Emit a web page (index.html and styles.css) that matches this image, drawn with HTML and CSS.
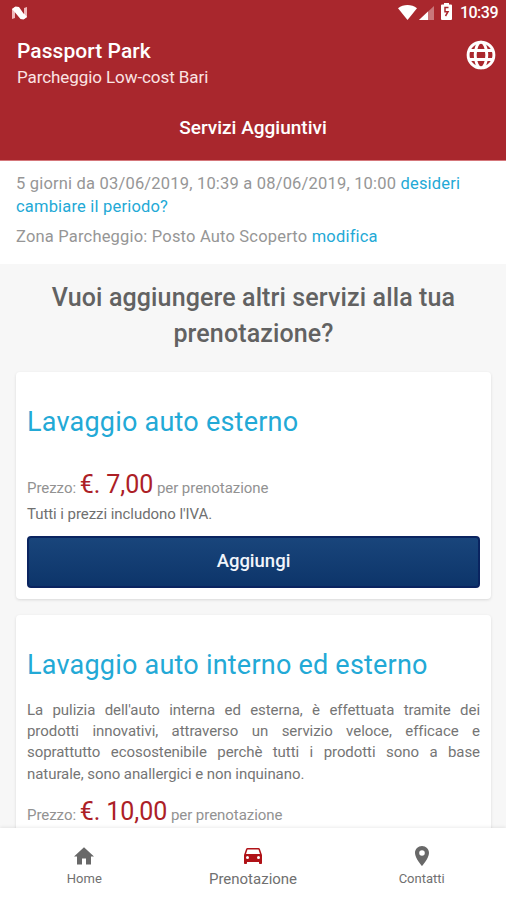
FILE: index.html
```html
<!DOCTYPE html>
<html lang="it">
<head>
<meta charset="utf-8">
<title>Passport Park</title>
<link rel="stylesheet" href="styles.css">
</head>
<body>
<div class="app">
  <header class="header">
    <div class="status">
      <svg class="status-logo" width="16" height="14" viewBox="0 0 16 14"><path d="M0 13V3L3 1v11zM15 1v10l-3 2V2z" fill="#efb9bb"/><path d="M0 3 3.500 0.500 7 1l4.500 6.500 1 .500 2.500 3-3.500 2.500L8.500 13 3.500 7z" fill="#fff"/></svg>
      <div class="status-right">
        <svg class="wifi" width="19" height="15" viewBox="0 0 19 15"><path d="M0 3.200C5.500-1 13.500-1 19 3.200L9.500 15z" fill="#fff"/></svg>
        <svg class="signal" width="15" height="14" viewBox="0 0 15 14"><path d="M0 14 15 0v14z" fill="#c9777b"/><path d="M0 14 9 5.600V14z" fill="#fff"/></svg>
        <svg class="battery" width="11" height="17" viewBox="0 0 11 17"><path d="M3 0h5v1.500h2q1 0 1 1V16q0 1-1 1H1q-1 0-1-1V2.500q0-1 1-1h2z" fill="#fff"/><path d="M7.500 4.500H4v4.200h3L4.500 13" fill="none" stroke="#a9272d" stroke-width="1.500"/></svg>
        <span class="clock">10:39</span>
      </div>
    </div>
    <div class="brand">
      <div>
        <h1 class="brand-name">Passport Park</h1>
        <p class="brand-sub">Parcheggio Low-cost Bari</p>
      </div>
      <svg class="globe" width="30" height="30" viewBox="0 0 30 30" fill="none" stroke="#fff" stroke-width="2.900"><circle cx="15" cy="15" r="12.900"/><ellipse cx="15" cy="15" rx="5.800" ry="12.900"/><path d="M2.500 10.500h25M2.500 19.500h25"/></svg>
    </div>
    <h2 class="page-title">Servizi Aggiuntivi</h2>
  </header>
  <section class="summary">
    <p class="period">5 giorni da 03/06/2019, 10:39 a 08/06/2019, 10:00 <a>desideri<br>cambiare il periodo?</a></p>
    <p class="zone">Zona Parcheggio: Posto Auto Scoperto <a>modifica</a></p>
  </section>
  <main class="content">
    <h2 class="question">Vuoi aggiungere altri servizi alla tua<br>prenotazione?</h2>
    <article class="card">
      <h3 class="card-title">Lavaggio auto esterno</h3>
      <p class="price first">Prezzo: <strong>€. 7,00</strong> per prenotazione</p>
      <p class="vat">Tutti i prezzi includono l'IVA.</p>
      <button class="add">Aggiungi</button>
    </article>
    <article class="card">
      <h3 class="card-title">Lavaggio auto interno ed esterno</h3>
      <p class="desc">La pulizia dell'auto interna ed esterna, è effettuata tramite dei prodotti innovativi, attraverso un servizio veloce, efficace e soprattutto ecosostenibile perchè tutti i prodotti sono a base naturale, sono anallergici e non inquinano.</p>
      <p class="price">Prezzo: <strong>€. 10,00</strong> per prenotazione</p>
    </article>
  </main>
  <nav class="tabs">
    <div class="tab">
      <svg width="24" height="24" viewBox="0 0 24 24"><path d="M10 20.500v-6h4v6h5v-8h3L12 3.200 2 12.500h3v8z" fill="#686868"/></svg>
      <span>Home</span>
    </div>
    <div class="tab active">
      <svg width="24" height="24" viewBox="0 0 24 24"><path d="M18.920 5.010C18.720 4.420 18.160 4 17.500 4h-11c-.660 0-1.210.420-1.420 1.010L3 11v8c0 .550.450 1 1 1h1c.550 0 1-.450 1-1v-1h12v1c0 .550.450 1 1 1h1c.550 0 1-.450 1-1v-8zM6.500 15a1.500 1.500 0 1 1 0-3 1.500 1.500 0 0 1 0 3zm11 0a1.500 1.500 0 1 1 0-3 1.500 1.500 0 0 1 0 3zM5 10l1.500-4.500h11L19 10z" fill="#b01217"/></svg>
      <span>Prenotazione</span>
    </div>
    <div class="tab">
      <svg width="24" height="24" viewBox="0 0 24 24"><path d="M12 2C8.130 2 5 5.130 5 9c0 5.250 7 13 7 13s7-7.750 7-13c0-3.870-3.130-7-7-7zm0 9.800a2.800 2.800 0 1 1 0-5.600 2.800 2.800 0 0 1 0 5.600z" fill="#686868"/></svg>
      <span>Contatti</span>
    </div>
  </nav>
</div>
</body>
</html>
```
FILE: styles.css
```css
* { box-sizing: border-box; }
body { margin: 0; font-family: Roboto, sans-serif; background: #f7f7f7; }
h1, h2, h3, p { margin: 0; }
a { color: #23a9d6; }

.app { width: 506px; height: 900px; display: flex; flex-direction: column; overflow: hidden; }

.header { flex: none; height: 161px; background: #a9272d; border-bottom: 1px solid #d5777b; color: #fff; }
.status { height: 26px; display: flex; justify-content: space-between; padding: 0 8px 0 12px; }
.status-logo { margin-top: 6px; }
.status-right { display: flex; align-items: flex-start; padding-top: 3px; }
.status-right svg { flex: none; }
.wifi { margin-top: 2px; }
.signal { margin: 3px 0 0 2px; }
.battery { margin: 0 8px 0 7px; }
.clock { font-size: 16px; line-height: 20px; font-weight: 500; letter-spacing: -0.500px; }
.brand { display: flex; justify-content: space-between; padding: 12px 10px 0 17px; height: 76px; }
.brand-name { font-size: 21px; line-height: 26px; font-weight: 500; letter-spacing: 0.050px; }
.brand-sub { margin-top: 2px; font-size: 17px; line-height: 22px; letter-spacing: -0.080px; color: #fbe3e3; }
.globe { margin-top: 2px; }
.page-title { margin-top: 13px; text-align: center; font-size: 19px; line-height: 26px; font-weight: 500; }

.summary { flex: none; height: 103px; background: #fff; padding: 11px 16px 0; color: #969696; font-size: 16.500px; line-height: 23px; letter-spacing: 0.190px; white-space: nowrap; }
.zone { margin-top: 7px; }

.content { flex: 1; min-height: 0; overflow: hidden; padding: 16px 15px 0 16px; }
.question { text-align: center; font-size: 25px; line-height: 36px; font-weight: 500; letter-spacing: 0.120px; color: #626262; white-space: nowrap; }
.card { background: #fff; border-radius: 4px; padding: 32px 11px 12px; box-shadow: 0 1px 3px rgba(0, 0, 0, .12); }
.question + .card { margin-top: 20px; height: 227px; }
.card + .card { margin-top: 16px; height: 260px; }
.card-title { font-size: 27px; line-height: 36px; font-weight: 400; letter-spacing: 0.220px; color: #23a9d6; white-space: nowrap; }
.price { margin-top: 11px; font-size: 15px; line-height: 32px; letter-spacing: -0.050px; color: #929292; white-space: nowrap; }
.price.first { margin-top: 29px; }
.price strong { font-size: 25px; font-weight: 400; color: #ac2026; }
.vat { font-size: 15px; line-height: 24px; letter-spacing: -0.060px; color: #707070; margin-top: -2px; }
.add { display: block; width: 100%; height: 52px; margin-top: 10px; padding: 0 0 3px; border: 2px solid #0a2460; border-radius: 4px; background: linear-gradient(#19457b, #0d356a); color: #f1f5fb; font: 500 18.500px Roboto, sans-serif; }
.desc { margin-top: 17px; font-size: 15px; line-height: 21.200px; letter-spacing: -0.060px; color: #757575; text-align: justify; }

.tabs { flex: none; height: 72px; background: #fff; display: flex; box-shadow: 0 -1px 3px rgba(0, 0, 0, .08); position: relative; }
.tab { flex: 1; display: flex; flex-direction: column; align-items: center; padding-top: 16px; font-size: 13px; line-height: 20px; color: #707070; }
.tab span { margin-top: 1px; }
.active { font-size: 15px; }
```
